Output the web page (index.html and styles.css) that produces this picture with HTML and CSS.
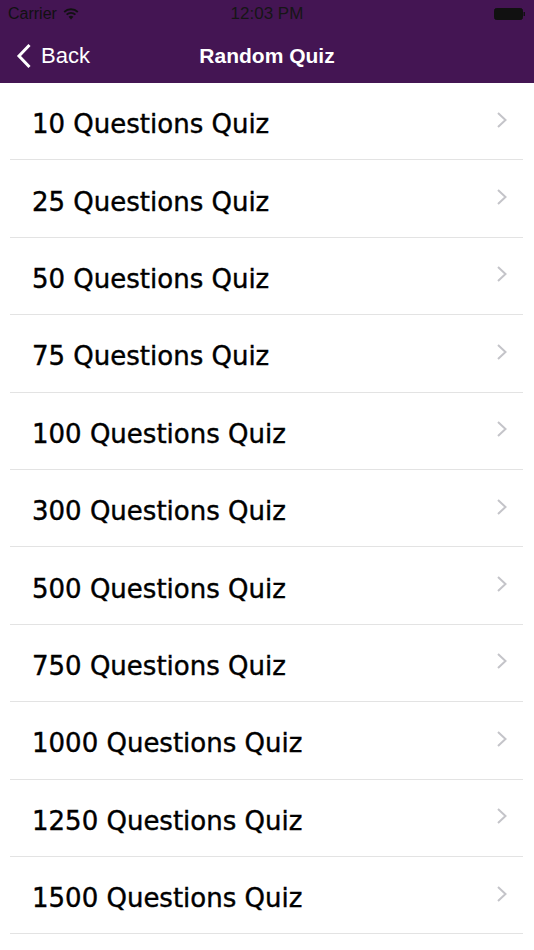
FILE: index.html
```html
<!DOCTYPE html>
<html lang="en">

<head>
    <meta charset="UTF-8">
    <meta name="viewport" content="width=device-width, initial-scale=1.0">
    <title>Random Quiz</title>
    <link rel="stylesheet" href="styles.css">
</head>

<body>
    <div class="top">
        <div class="status">
            <div class="carrier">
                Carrier
                <svg class="wifi" width="16" height="12" viewBox="0 0 16 12">
                    <path d="M8 11.5 L5.6 8.7 A3.6 3.6 0 0 1 10.4 8.7 Z" fill="#111"/>
                    <path d="M3.6 6.6 A6.4 6.4 0 0 1 12.4 6.6" stroke="#111" stroke-width="1.8" fill="none"/>
                    <path d="M1.2 4 A9.8 9.8 0 0 1 14.8 4" stroke="#111" stroke-width="1.8" fill="none"/>
                </svg>
            </div>
            <div class="time">12:03 PM</div>
            <div class="battery">
                <svg width="32" height="12" viewBox="0 0 32 12">
                    <rect x="0.5" y="0.5" width="28" height="11" rx="2" fill="#111" stroke="#111"/>
                    <rect x="29.5" y="4" width="1.5" height="4" fill="#111"/>
                </svg>
            </div>
        </div>
        <div class="navbar">
            <a class="back" href="#">
                <svg width="16" height="26" viewBox="0 0 16 26">
                    <path d="M13.5 2 L3 13 L13.5 24" stroke="#fff" stroke-width="3" fill="none"/>
                </svg>
                <span>Back</span>
            </a>
            <div class="title">Random Quiz</div>
        </div>
    </div>

    <ul class="list" id="lista"></ul>

    <script>
        // Montar a lista de quizzes
        const quantidades = [10, 25, 50, 75, 100, 300, 500, 750, 1000, 1250, 1500];
        let html = '';
        quantidades.forEach(function (q) {
            html += `
                <li class="row">
                    <span class="label">${q} Questions Quiz</span>
                    <svg class="chevron" width="12" height="18" viewBox="0 0 12 18">
                        <path d="M2 2 L9.5 9 L2 16" stroke="#c4c4c9" stroke-width="2" fill="none"/>
                    </svg>
                </li>
            `;
        });
        document.getElementById('lista').innerHTML = html;
    </script>
</body>

</html>
```

FILE: styles.css
```css
body {
    margin: 0;
    font-family: "Liberation Sans", Arial, sans-serif;
    background-color: #fff;
}

.top {
    background-color: #441553;
}

.status {
    height: 28px;
    display: flex;
    align-items: center;
    justify-content: space-between;
    padding: 0 8px;
    color: #111;
    font-size: 16px;
    position: relative;
}

.carrier {
    display: flex;
    align-items: center;
    gap: 6px;
}

.time {
    position: absolute;
    left: 0;
    right: 0;
    text-align: center;
    color: #161616;
    font-size: 17px;
}

.battery {
    display: flex;
    align-items: center;
}

.navbar {
    height: 55px;
    display: flex;
    align-items: center;
    position: relative;
}

.back {
    display: flex;
    align-items: center;
    gap: 9px;
    padding-left: 16px;
    color: #fff;
    text-decoration: none;
    font-size: 22px;
    z-index: 1;
}

.title {
    position: absolute;
    left: 0;
    right: 0;
    text-align: center;
    color: #fff;
    font-size: 21px;
    font-weight: bold;
}

.list {
    list-style: none;
    margin: 0;
    padding: 0;
}

.row {
    height: 77.4px;
    box-sizing: border-box;
    margin: 0 11px 0 10px;
    padding: 0 15px 0 22px;
    border-bottom: 1px solid #e3e3e3;
    display: flex;
    align-items: center;
    justify-content: space-between;
}

.label {
    font-family: "DejaVu Sans", sans-serif;
    font-size: 26px;
    color: #000;
    padding-top: 6px;
    -webkit-text-stroke: 0.4px #000;
}

.chevron {
    margin-top: -3px;
}
```
